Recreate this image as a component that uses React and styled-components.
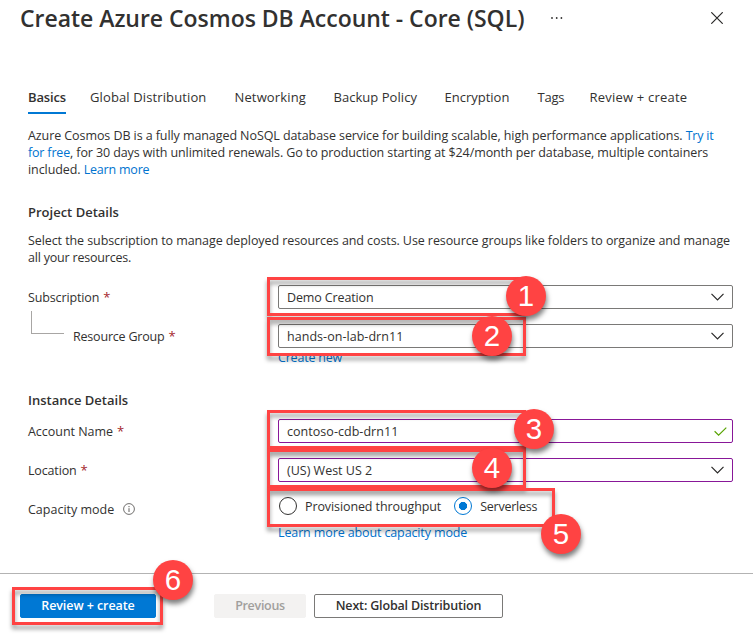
import React from 'react';
import styled, { createGlobalStyle } from 'styled-components';

const Global = createGlobalStyle`
  * { box-sizing: border-box; }
  body { margin: 0; background: #fff; overflow: hidden; }
`;

const Page = styled.div`
  position: relative;
  width: 753px;
  height: 634px;
  display: flex;
  flex-direction: column;
  background: #fff;
  color: #323130;
  font: 12.5px/17px "Open Sans", "Noto Sans", sans-serif;
  white-space: nowrap;
`;

const Header = styled.header`
  display: flex;
  align-items: center;
  height: 36px;
  padding: 0 30px 0 20px;
`;

const Title = styled.h1`
  margin: 0;
  font-size: 23px;
  line-height: 36px;
  font-weight: 600;
  letter-spacing: -0.03px;
`;

const MoreIcon = styled.svg`
  margin-left: 26px;
`;

const CloseIcon = styled.svg`
  margin-left: auto;
`;

const Tabs = styled.nav`
  display: grid;
  grid-template-columns: 62px 144.5px 99px 111px 93px 52px auto;
  justify-items: start;
  margin: 50px 0 0 28px;
  height: 28px;
`;

const Tab = styled.span`
  height: 28px;
  font-size: 13px;
  line-height: 22px;
  font-weight: ${p => (p.$active ? 600 : 400)};
  letter-spacing: ${p => p.$ls || 0}px;
  border-bottom: 2px solid ${p => (p.$active ? '#0078d4' : 'transparent')};
`;

const Content = styled.main`
  display: flex;
  flex-direction: column;
  height: 459px;
  padding: 13px 20px 0 28px;
`;

const Paragraph = styled.p`
  margin: 0 0 ${p => p.$after || 0}px;
`;

const Line = styled.span`
  display: block;
`;

const Text = styled.span`
  letter-spacing: ${p => p.$ls || 0}px;
`;

const Link = styled(Text)`
  color: #0073cf;
`;

const Heading = styled.h2`
  margin: 0 0 ${p => p.$after}px;
  font-size: 13px;
  line-height: 18px;
  font-weight: 600;
`;

const Field = styled.div`
  display: grid;
  grid-template-columns: 250px 455px;
  align-items: center;
  height: 24px;
  margin-bottom: ${p => p.$after || 0}px;
`;

const Label = styled.label`
  display: flex;
  align-items: center;
  letter-spacing: ${p => p.$ls || 0}px;
`;

const Star = styled.span`
  margin-left: 4px;
  color: #a4262c;
  font-size: 13px;
`;

const Branch = styled.span`
  width: 33px;
  height: 23px;
  margin: -28px 9px 0 3px;
  border: solid #a8a6a4;
  border-width: 0 0 1px 1px;
`;

const Input = styled.div`
  display: flex;
  align-items: center;
  justify-content: space-between;
  height: 24px;
  padding: 0 ${p => (p.$valid ? 5 : 8)}px 0 8px;
  border: 1px solid ${p => (p.$edited ? '#881798' : '#7a7977')};
  border-radius: 2px;
  background: #fff;
`;

const SubLink = styled.div`
  height: 17px;
  margin: 0 0 ${p => p.$after || 0}px 250px;
`;

const InfoIcon = styled.svg`
  margin-left: 9px;
`;

const Radios = styled.div`
  display: flex;
  align-items: center;
  margin-top: -7px;
`;

const RadioText = styled(Text)`
  padding-top: 1px;
`;

const Radio = styled.span`
  width: 18px;
  height: 18px;
  margin: 0 8px 0 ${p => (p.$on ? 13 : 1)}px;
  border: 1px solid ${p => (p.$on ? '#0078d4' : '#323130')};
  border-radius: 50%;
  background: ${p => (p.$on ? 'radial-gradient(circle, #0078d4 3.8px, #fff 4.4px)' : '#fff')};
`;

const Footer = styled.footer`
  display: flex;
  height: 61px;
  padding: 20px 0 0 20px;
  border-top: 1px solid #b3b3b3;
`;

const Button = styled.button`
  width: ${p => p.$w}px;
  height: 24px;
  margin: 0 ${p => p.$after || 0}px 0 0;
  padding: 0 0 1px;
  border: 1px solid ${p => p.$border};
  border-radius: 2px;
  background: ${p => p.$bg};
  color: ${p => p.$fg};
  font: 600 12.5px/20px "Open Sans", "Noto Sans", sans-serif;
  letter-spacing: ${p => p.$ls}px;
`;

const Frame = styled.div`
  position: absolute;
  left: ${p => p.$x}px;
  top: ${p => p.$y}px;
  width: ${p => p.$w}px;
  height: ${p => p.$h}px;
  border: 3px solid #ff4343;
  filter: drop-shadow(0 4px 2px rgba(0, 0, 0, 0.4));
`;

const Badge = styled.div`
  position: absolute;
  left: ${p => p.$x}px;
  top: ${p => p.$y}px;
  width: 40px;
  height: 40px;
  border-radius: 50%;
  background: #ff4343;
  color: #fff;
  text-align: center;
  font: 29.5px/40px "Liberation Sans", Arial, sans-serif;
  box-shadow: 1px 4px 5px rgba(0, 0, 0, 0.5);
`;

const Chevron = () => (
  <svg width="13" height="8" viewBox="0 0 13 8" fill="none" stroke="#292827" strokeWidth="1.2">
    <path d="M.5.8 6.5 6.8 12.5.8" />
  </svg>
);

const Check = () => (
  <svg width="13" height="9" viewBox="0 0 13 9" fill="none" stroke="#57a300" strokeWidth="1.2">
    <path d="M.6 4.3 4.6 8.1 12.3.6" />
  </svg>
);

const frames = [
  [267, 277, 259, 39],
  [267, 317, 259, 39],
  [267, 410, 259, 39],
  [267, 449, 259, 39],
  [267, 488, 288, 39],
  [12, 587, 151, 38],
];

const badges = [[506, 276], [472, 316], [514, 409], [472, 448], [541, 514], [153, 560]];

export default function App() {
  return (
    <Page>
      <Global />
      <Header>
        <Title>Create Azure Cosmos DB Account - Core (SQL)</Title>
        <MoreIcon width="14" height="4" viewBox="0 0 14 4" fill="#323130">
          <circle cx="2" cy="2" r=".9" />
          <circle cx="6.7" cy="2" r=".9" />
          <circle cx="11.4" cy="2" r=".9" />
        </MoreIcon>
        <CloseIcon width="12" height="12" viewBox="0 0 12 12" stroke="#292827" strokeWidth="1.2">
          <path d="M.3.3 11.7 11.7M11.7.3.3 11.7" />
        </CloseIcon>
      </Header>
      <Tabs>
        <Tab $active $ls={-0.14}>Basics</Tab>
        <Tab $ls={0.12}>Global Distribution</Tab>
        <Tab $ls={0.14}>Networking</Tab>
        <Tab $ls={0.04}>Backup Policy</Tab>
        <Tab>Encryption</Tab>
        <Tab $ls={-0.2}>Tags</Tab>
        <Tab $ls={0.21}>Review + create</Tab>
      </Tabs>
      <Content>
        <Paragraph $after={25}>
          <Line>
            <Text $ls={-0.08}>Azure Cosmos DB is a fully managed NoSQL database service for building scalable, high performance applications. </Text>
            <Link $ls={-0.2}>Try it</Link>
          </Line>
          <Line>
            <Link $ls={-0.18}>for free</Link>
            <Text $ls={-0.1}>, for 30 days with unlimited renewals. Go to production starting at $24/month per database, multiple containers</Text>
          </Line>
          <Line>
            <Text $ls={-0.08}>included. </Text>
            <Link $ls={-0.2}>Learn more</Link>
          </Line>
        </Paragraph>
        <Heading $after={11}>Project Details</Heading>
        <Paragraph $after={19}>
          <Line><Text $ls={-0.086}>Select the subscription to manage deployed resources and costs. Use resource groups like folders to organize and manage</Text></Line>
          <Line><Text $ls={-0.2}>all your resources.</Text></Line>
        </Paragraph>
        <Field $after={15}>
          <Label $ls={-0.13}>Subscription<Star>*</Star></Label>
          <Input><Text $ls={-0.13}>Demo Creation</Text><Chevron /></Input>
        </Field>
        <Field $after={1}>
          <Label $ls={-0.2}><Branch />Resource Group<Star>*</Star></Label>
          <Input><Text $ls={0.04}>hands-on-lab-drn11</Text><Chevron /></Input>
        </Field>
        <SubLink $after={25}><Link $ls={-0.2}>Create new</Link></SubLink>
        <Heading $after={10}>Instance Details</Heading>
        <Field $after={15}>
          <Label $ls={-0.03}>Account Name<Star>*</Star></Label>
          <Input $edited $valid><Text $ls={0.04}>contoso-cdb-drn11</Text><Check /></Input>
        </Field>
        <Field $after={15}>
          <Label $ls={-0.16}>Location<Star>*</Star></Label>
          <Input $edited><Text>(US) West US 2</Text><Chevron /></Input>
        </Field>
        <Field $after={3}>
          <Label>
            Capacity mode
            <InfoIcon width="12" height="12" viewBox="0 0 12 12" fill="none" stroke="#605e5c">
              <circle cx="6" cy="6" r="5.4" strokeWidth=".9" />
              <path d="M6 5.2V9M6 3V4.2" strokeWidth="1" />
            </InfoIcon>
          </Label>
          <Radios>
            <Radio />
            <RadioText $ls={-0.1}>Provisioned throughput</RadioText>
            <Radio $on />
            <RadioText $ls={-0.24}>Serverless</RadioText>
          </Radios>
        </Field>
        <SubLink><Link $ls={-0.12}>Learn more about capacity mode</Link></SubLink>
      </Content>
      <Footer>
        <Button $w={136} $after={58} $bg="#0078d4" $border="#0078d4" $fg="#fff" $ls={-0.07}>Review + create</Button>
        <Button $w={92} $after={8} $bg="#f3f2f1" $border="#f3f2f1" $fg="#a19f9d" $ls={-0.3}>Previous</Button>
        <Button $w={189} $bg="#fff" $border="#7a7977" $fg="#323130" $ls={-0.17}>Next: Global Distribution</Button>
      </Footer>
      {frames.map(([x, y, w, h]) => <Frame key={y} $x={x} $y={y} $w={w} $h={h} />)}
      {badges.map(([x, y], i) => <Badge key={y} $x={x} $y={y}>{i + 1}</Badge>)}
    </Page>
  );
}
